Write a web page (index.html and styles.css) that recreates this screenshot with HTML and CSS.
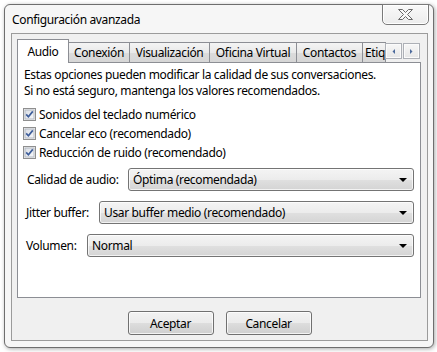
FILE: index.html
```html
<!DOCTYPE html>
<html lang="es">
<head>
<meta charset="utf-8">
<title>Configuración avanzada</title>
<link rel="stylesheet" href="styles.css">
</head>
<body>
<div class="window">
  <div class="titlebar">
    <span class="title">Configuración avanzada</span>
    <button class="close" aria-label="Cerrar">
      <svg width="15" height="11" viewBox="0 0 15 11"><path d="M0.5 0.5H4.5L7.5 3.5L10.5 0.5H14.5L9.5 5.5L14.5 10.5H10.5L7.5 7.5L4.5 10.5H0.5L5.5 5.5Z" fill="#fafafa" stroke="#6a6a6a" stroke-width="1" stroke-linejoin="round"/></svg>
    </button>
  </div>
  <div class="client">
    <div class="tabs">
      <div class="tab active w-audio"><span>Audio</span></div>
      <div class="tab w-con"><span>Conexión</span></div>
      <div class="tab w-vis"><span>Visualización</span></div>
      <div class="tab w-ofi"><span>Oficina Virtual</span></div>
      <div class="tab w-cont"><span>Contactos</span></div>
      <div class="tab w-eti"><span>Etiquetas</span></div>
      <div class="scroller">
        <div class="sbtn"><svg width="3" height="5" viewBox="0 0 3 5"><path d="M3 0V5L0.5 2.5Z" fill="#4c6a9c"/></svg></div>
        <div class="sbtn"><svg width="3" height="5" viewBox="0 0 3 5"><path d="M0 0V5L2.5 2.5Z" fill="#4c6a9c"/></svg></div>
      </div>
    </div>
    <div class="panel">
      <p class="intro">Estas opciones pueden modificar la calidad de sus conversaciones.<br>Si no está seguro, mantenga los valores recomendados.</p>
      <div class="checks">
        <label class="check"><svg class="cb" width="13" height="13" viewBox="0 0 13 13"><defs><linearGradient id="g" x1="0" y1="0" x2="1" y2="1"><stop offset="0" stop-color="#d9dde4"/><stop offset="1" stop-color="#f7f8fa"/></linearGradient></defs><rect x="0.5" y="0.5" width="12" height="12" fill="#f4f4f4" stroke="#8f8f8f"/><rect x="2" y="2" width="9" height="9" fill="url(#g)" stroke="#b4b9c2" stroke-width="1"/><path d="M3.2 6.4L5.4 8.8L9.8 3.4" fill="none" stroke="#3d5d9a" stroke-width="1.7"/></svg><span>Sonidos del teclado numérico</span></label>
        <label class="check"><svg class="cb" width="13" height="13" viewBox="0 0 13 13"><rect x="0.5" y="0.5" width="12" height="12" fill="#f4f4f4" stroke="#8f8f8f"/><rect x="2" y="2" width="9" height="9" fill="url(#g)" stroke="#b4b9c2" stroke-width="1"/><path d="M3.2 6.4L5.4 8.8L9.8 3.4" fill="none" stroke="#3d5d9a" stroke-width="1.7"/></svg><span>Cancelar eco (recomendado)</span></label>
        <label class="check"><svg class="cb" width="13" height="13" viewBox="0 0 13 13"><rect x="0.5" y="0.5" width="12" height="12" fill="#f4f4f4" stroke="#8f8f8f"/><rect x="2" y="2" width="9" height="9" fill="url(#g)" stroke="#b4b9c2" stroke-width="1"/><path d="M3.2 6.4L5.4 8.8L9.8 3.4" fill="none" stroke="#3d5d9a" stroke-width="1.7"/></svg><span>Reducción de ruido (recomendado)</span></label>
      </div>
      <div class="fields">
        <div class="field"><span class="lbl lbl-q">Calidad de audio:</span><div class="combo"><span>Óptima (recomendada)</span><i class="arrow"></i></div></div>
        <div class="field"><span class="lbl lbl-j">Jitter buffer:</span><div class="combo"><span>Usar buffer medio (recomendado)</span><i class="arrow"></i></div></div>
        <div class="field"><span class="lbl lbl-v">Volumen:</span><div class="combo"><span>Normal</span><i class="arrow"></i></div></div>
      </div>
    </div>
    <div class="buttons">
      <button class="btn">Aceptar</button>
      <button class="btn">Cancelar</button>
    </div>
  </div>
</div>
</body>
</html>
```

FILE: styles.css
```css
* { box-sizing: border-box; }
html, body { margin: 0; padding: 0; background: #ffffff; }
body {
  font-family: "Noto Sans", "Open Sans", sans-serif;
  font-size: 12px;
  letter-spacing: -0.35px;
  color: #000;
}
.window {
  margin: 4px;
  width: 430px;
  height: 344px;
  border: 1px solid #6e6e6e;
  border-radius: 6px;
  background: #f6f6f6;
  box-shadow: 1px 1px 4px rgba(0,0,0,0.35);
  padding: 0 5px 6px 6px;
  display: flex;
  flex-direction: column;
}
.titlebar {
  height: 28px;
  display: flex;
  align-items: flex-start;
}
.title {
  padding: 7px 0 0 1px;
  line-height: 16px;
}
.close {
  margin: -1px -1px 0 auto;
  width: 47px;
  height: 21px;
  border: 1px solid #7a7a7a;
  border-radius: 0 0 5px 5px;
  background: linear-gradient(#f9f9f9, #ececec);
  box-shadow: inset 0 0 0 1px #fff;
  padding: 0;
  display: flex;
  align-items: center;
  justify-content: center;
}
.close svg { display: block; margin-top: -1px; }
.client {
  flex: 1;
  border: 1px solid #9b9b9b;
  background: #f0f0f0;
  padding: 5px 6px 5px 5px;
  display: flex;
  flex-direction: column;
}
.tabs {
  position: relative;
  height: 23px;
  display: flex;
  align-items: flex-end;
}
.tab {
  height: 20px;
  margin-left: -1px;
  border: 1px solid #8c8e94;
  border-bottom: none;
  background: linear-gradient(#f4f4f4, #e9e9e9 50%, #dcdcdc 51%, #d6d6d6);
  display: flex;
  justify-content: center;
  align-items: center;
  line-height: 16px;
  white-space: nowrap;
  overflow: hidden;
  flex: none;
}
.tab.active {
  height: 24px;
  margin-bottom: -1px;
  margin-left: 0;
  background: #fff;
  position: relative;
  z-index: 2;
  align-items: flex-start;
  padding-top: 4px;
}
.tab span { display: block; }
.w-audio { width: 52px; }
.w-con { width: 62px; }
.w-vis { width: 81px; }
.w-ofi { width: 88px; }
.w-cont { width: 67px; }
.w-eti { width: 24px; justify-content: flex-start; padding-left: 2px; }
.scroller {
  position: absolute;
  right: 1px;
  top: 4px;
  display: flex;
  gap: 1px;
  z-index: 3;
}
.sbtn {
  width: 17px;
  height: 16px;
  border: 1px solid #adb0b6;
  background: linear-gradient(#f7f7f7, #e6e6e6);
  box-shadow: inset 0 0 0 1px #fbfbfb;
  display: flex;
  align-items: center;
  justify-content: center;
}
.sbtn svg { display: block; }
.panel {
  height: 236px;
  border: 1px solid #8c8e94;
  background: #fff;
  padding: 4px 6px 0 5px;
  flex: none;
}
.intro {
  margin: 0;
  padding-left: 1px;
  line-height: 16px;
}
.checks {
  margin-top: 6px;
  display: flex;
  flex-direction: column;
}
.check {
  height: 19px;
  display: flex;
  align-items: center;
  gap: 3px;
}
.cb { display: block; flex: none; }
.check span { line-height: 16px; }
.fields {
  margin-top: 6px;
  display: flex;
  flex-direction: column;
  gap: 10px;
}
.field {
  display: flex;
  align-items: center;
  padding-left: 3px;
}
.lbl { flex: none; line-height: 16px; }
.lbl-q { width: 102px; padding-left: 1px; }
.lbl-j { width: 73px; }
.lbl-v { width: 61px; }
.combo {
  flex: 1;
  height: 23px;
  border: 1px solid #747474;
  border-radius: 3px;
  background: linear-gradient(#f4f4f4, #ececec 50%, #e0e0e0 51%, #d4d4d4);
  box-shadow: inset 0 0 0 1px rgba(255,255,255,0.7);
  display: flex;
  align-items: center;
  padding: 0 6px 0 4px;
  line-height: 16px;
}
.combo span { flex: 1; }
.arrow {
  width: 0;
  height: 0;
  border-left: 4px solid transparent;
  border-right: 4px solid transparent;
  border-top: 4px solid #000;
  margin-top: 1px;
}
.buttons {
  margin-top: 13px;
  display: flex;
  justify-content: center;
  gap: 12px;
  padding-left: 1px;
}
.btn {
  width: 86px;
  height: 24px;
  border: 1px solid #707070;
  border-radius: 3px;
  background: linear-gradient(#f2f2f2, #ebebeb 50%, #dddddd 51%, #cfcfcf);
  box-shadow: inset 0 0 0 1px rgba(255,255,255,0.75);
  font-family: inherit;
  font-size: 12px;
  letter-spacing: inherit;
  color: #000;
  padding: 0;
}
```
